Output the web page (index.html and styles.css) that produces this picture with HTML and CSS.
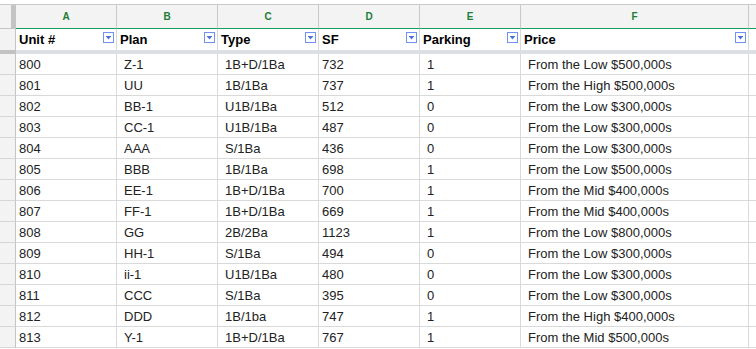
FILE: index.html
```html
<!DOCTYPE html>
<html>
<head>
<meta charset="utf-8">
<link rel="stylesheet" href="styles.css">
</head>
<body>
<div class="sheet">
  <div class="corner"></div>
  <div class="col">A</div><div class="col">B</div><div class="col">C</div><div class="col">D</div><div class="col">E</div><div class="col">F</div><div class="col rest"></div>

  <div class="rh hrh"></div>
  <div class="hd"><span>Unit #</span><svg class="flt" width="11" height="11" viewBox="0 0 11 11"><rect x="0.5" y="0.5" width="10" height="10" fill="#fff" stroke="#7292f2"/><path d="M3 4h5v1H3z" fill="#4d6fdf"/><path d="M3.5 5h4L5.5 7.5z" fill="#4d6fdf"/></svg></div>
  <div class="hd"><span>Plan</span><svg class="flt" width="11" height="11" viewBox="0 0 11 11"><rect x="0.5" y="0.5" width="10" height="10" fill="#fff" stroke="#7292f2"/><path d="M3 4h5v1H3z" fill="#4d6fdf"/><path d="M3.5 5h4L5.5 7.5z" fill="#4d6fdf"/></svg></div>
  <div class="hd"><span>Type</span><svg class="flt" width="11" height="11" viewBox="0 0 11 11"><rect x="0.5" y="0.5" width="10" height="10" fill="#fff" stroke="#7292f2"/><path d="M3 4h5v1H3z" fill="#4d6fdf"/><path d="M3.5 5h4L5.5 7.5z" fill="#4d6fdf"/></svg></div>
  <div class="hd"><span>SF</span><svg class="flt" width="11" height="11" viewBox="0 0 11 11"><rect x="0.5" y="0.5" width="10" height="10" fill="#fff" stroke="#7292f2"/><path d="M3 4h5v1H3z" fill="#4d6fdf"/><path d="M3.5 5h4L5.5 7.5z" fill="#4d6fdf"/></svg></div>
  <div class="hd"><span>Parking</span><svg class="flt" width="11" height="11" viewBox="0 0 11 11"><rect x="0.5" y="0.5" width="10" height="10" fill="#fff" stroke="#7292f2"/><path d="M3 4h5v1H3z" fill="#4d6fdf"/><path d="M3.5 5h4L5.5 7.5z" fill="#4d6fdf"/></svg></div>
  <div class="hd"><span>Price</span><svg class="flt" width="11" height="11" viewBox="0 0 11 11"><rect x="0.5" y="0.5" width="10" height="10" fill="#fff" stroke="#7292f2"/><path d="M3 4h5v1H3z" fill="#4d6fdf"/><path d="M3.5 5h4L5.5 7.5z" fill="#4d6fdf"/></svg></div>
  <div class="hd rest"></div>

  <div class="freeze"></div>

  <div class="rh"></div><div class="c">800</div><div class="c sp">Z-1</div><div class="c sp">1B+D/1Ba</div><div class="c">732</div><div class="c sp">1</div><div class="c sp">From the Low $500,000s</div><div class="c rest"></div>
  <div class="rh"></div><div class="c">801</div><div class="c sp">UU</div><div class="c sp">1B/1Ba</div><div class="c">737</div><div class="c sp">1</div><div class="c sp">From the High $500,000s</div><div class="c rest"></div>
  <div class="rh"></div><div class="c">802</div><div class="c sp">BB-1</div><div class="c sp">U1B/1Ba</div><div class="c">512</div><div class="c sp">0</div><div class="c sp">From the Low $300,000s</div><div class="c rest"></div>
  <div class="rh"></div><div class="c">803</div><div class="c sp">CC-1</div><div class="c sp">U1B/1Ba</div><div class="c">487</div><div class="c sp">0</div><div class="c sp">From the Low $300,000s</div><div class="c rest"></div>
  <div class="rh"></div><div class="c">804</div><div class="c sp">AAA</div><div class="c sp">S/1Ba</div><div class="c">436</div><div class="c sp">0</div><div class="c sp">From the Low $300,000s</div><div class="c rest"></div>
  <div class="rh"></div><div class="c">805</div><div class="c sp">BBB</div><div class="c sp">1B/1Ba</div><div class="c">698</div><div class="c sp">1</div><div class="c sp">From the Low $500,000s</div><div class="c rest"></div>
  <div class="rh"></div><div class="c">806</div><div class="c sp">EE-1</div><div class="c sp">1B+D/1Ba</div><div class="c">700</div><div class="c sp">1</div><div class="c sp">From the Mid $400,000s</div><div class="c rest"></div>
  <div class="rh"></div><div class="c">807</div><div class="c sp">FF-1</div><div class="c sp">1B+D/1Ba</div><div class="c">669</div><div class="c sp">1</div><div class="c sp">From the Mid $400,000s</div><div class="c rest"></div>
  <div class="rh"></div><div class="c">808</div><div class="c sp">GG</div><div class="c sp">2B/2Ba</div><div class="c">1123</div><div class="c sp">1</div><div class="c sp">From the Low $800,000s</div><div class="c rest"></div>
  <div class="rh"></div><div class="c">809</div><div class="c sp">HH-1</div><div class="c sp">S/1Ba</div><div class="c">494</div><div class="c sp">0</div><div class="c sp">From the Low $300,000s</div><div class="c rest"></div>
  <div class="rh"></div><div class="c">810</div><div class="c sp">ii-1</div><div class="c sp">U1B/1Ba</div><div class="c">480</div><div class="c sp">0</div><div class="c sp">From the Low $300,000s</div><div class="c rest"></div>
  <div class="rh"></div><div class="c">811</div><div class="c sp">CCC</div><div class="c sp">S/1Ba</div><div class="c">395</div><div class="c sp">0</div><div class="c sp">From the Low $300,000s</div><div class="c rest"></div>
  <div class="rh"></div><div class="c">812</div><div class="c sp">DDD</div><div class="c sp">1B/1ba</div><div class="c">747</div><div class="c sp">1</div><div class="c sp">From the High $400,000s</div><div class="c rest"></div>
  <div class="rh"></div><div class="c">813</div><div class="c sp">Y-1</div><div class="c sp">1B+D/1Ba</div><div class="c">767</div><div class="c sp">1</div><div class="c sp">From the Mid $500,000s</div><div class="c rest"></div>
</div>
</body>
</html>
```
FILE: styles.css
```css
* { box-sizing: border-box; }
html, body { margin: 0; padding: 0; background: #fff; }
body { font-family: "Liberation Sans", Arial, sans-serif; font-size: 13px; color: #222; }

.sheet {
  margin-top: 4px;
  border-top: 1px solid #cbcbcb;
  display: grid;
  grid-template-columns: 16px repeat(5, 101px) 228px 1fr;
}

.corner {
  height: 24px;
  background: linear-gradient(to right, #f3f3f3 11px, #c4c4c4 11px);
  border-bottom: 1px solid #c4c4c4;
}

.col {
  height: 24px;
  background: #f3f3f3;
  border-right: 1px solid #c9c9c9;
  border-bottom: 1px solid #12a05a;
  text-align: center;
  font-size: 10px;
  font-weight: bold;
  color: #1d7d33;
  line-height: 23px;
}
.col.rest { border-right: none; }

.rh {
  height: 21px;
  background: #f3f3f3;
  border-right: 1px solid #c4c4c4;
  border-bottom: 1px solid #d6d6d6;
}
.hrh { border-bottom: none; }

.hd {
  height: 21px;
  border-right: 1px solid #d9d9d9;
  display: flex;
  justify-content: space-between;
  align-items: flex-start;
  padding-left: 3px;
  padding-right: 2px;
  font-weight: bold;
  color: #000;
  line-height: 21px;
}
.hd .flt { margin-top: 3px; flex: none; }
.hd.rest { border-right: none; }

.freeze {
  grid-column: 1 / -1;
  height: 4px;
  background: linear-gradient(to right, #c2c2c2 16px, #dcdfe6 16px);
}

.c {
  height: 21px;
  border-right: 1px solid #d9d9d9;
  border-bottom: 1px solid #d9d9d9;
  padding-left: 3px;
  line-height: 21px;
  white-space: nowrap;
  overflow: hidden;
}
.c.sp { padding-left: 7px; }
.c.rest { border-right: none; }
```
